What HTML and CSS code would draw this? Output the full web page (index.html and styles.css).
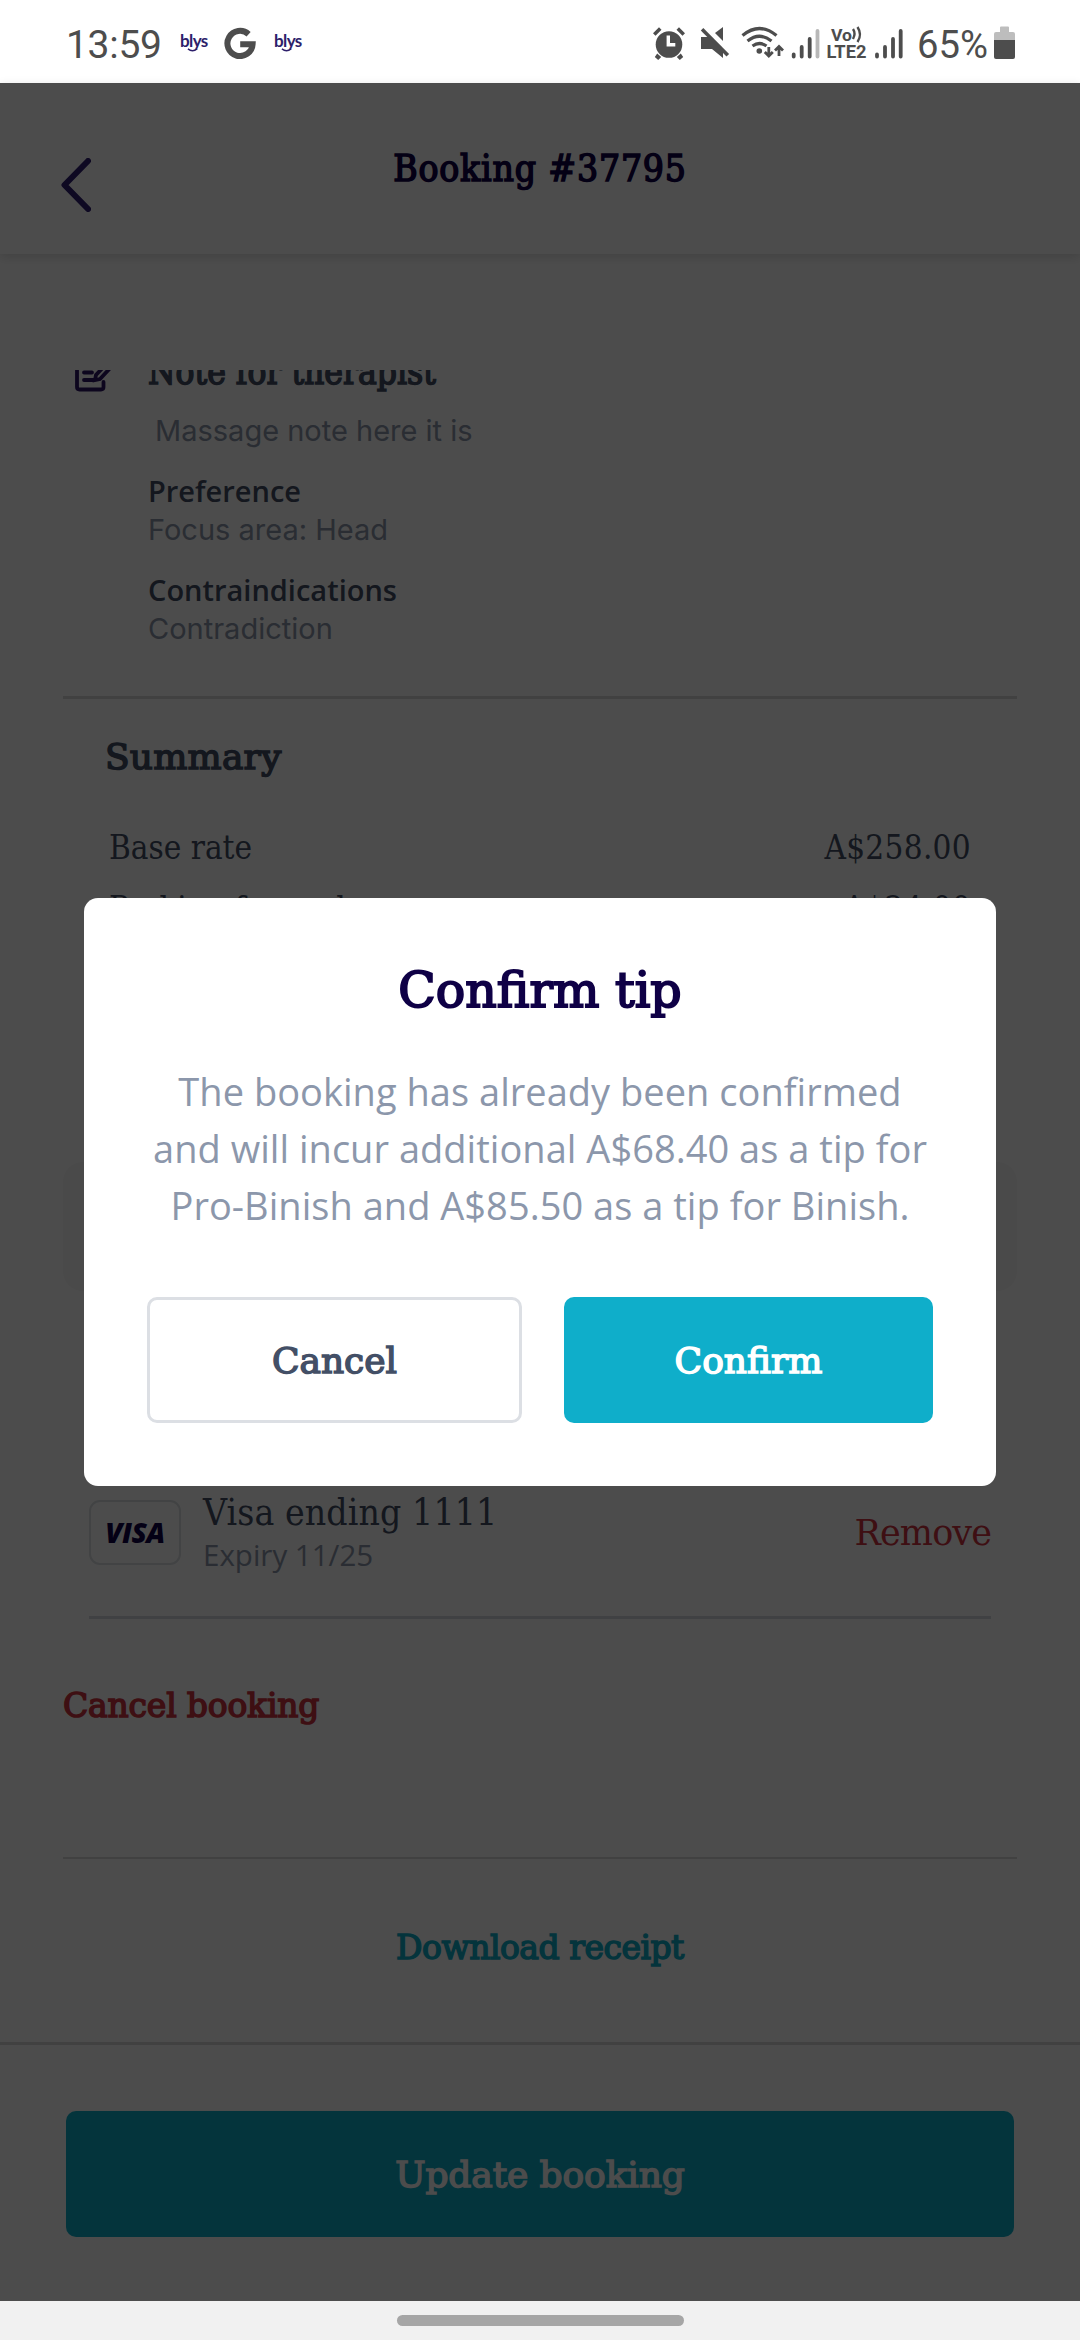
FILE: index.html
```
<!DOCTYPE html>
<html lang="en">
<head>
    <meta charset="UTF-8">
    <meta name="viewport" content="width=device-width, initial-scale=1.0">
    <title>Booking #37795</title>
    <link rel="stylesheet" href="styles.css">
</head>
<body>

<div class="status-bar">
    <div class="status-left">
        <span class="clock">13:59</span>
        <span class="blys">blys<svg class="smile" viewBox="0 0 12 4"><path d="M1 0.8Q6 4.6 11 0.8"/></svg></span>
        <svg class="google" viewBox="0 0 32 32"><path d="M24.6 7.2A12.6 12.6 0 1 0 28.6 17.2H16.2"/></svg>
        <span class="blys">blys<svg class="smile" viewBox="0 0 12 4"><path d="M1 0.8Q6 4.6 11 0.8"/></svg></span>
    </div>
    <!-- alarm, mute, wifi, signal bars, VoLTE, battery -->
    <svg class="status-icons" viewBox="0 0 380 50">
        <g fill="#4d4d4d">
            <circle cx="24" cy="24.5" r="13.3"/>
            <path d="M12.2 33.5l4 3.5-3 3-3.4-3zM35.8 33.5l-4 3.5 3 3 3.4-3z"/>
            <path d="M8 13.2l6-6 2.5 2.6-6 6zM40 13.2l-6-6-2.5 2.6 6 6z"/>
        </g>
        <path d="M23.3 15.5v9.3h7" stroke="#fff" stroke-width="3.4" fill="none"/>
        <g fill="#4d4d4d">
            <path d="M56 17h8l14 14v7L67 29H56z"/>
            <path d="M78 7v14l-8-8z"/>
            <path d="M58.3 8l25.8 26-2.6 2.6L55.8 10.5z"/>
            <circle cx="114.3" cy="31" r="2.8"/>
        </g>
        <g stroke="#4d4d4d" stroke-width="3.2" fill="none">
            <path d="M97.5 15.5q17-14 34 0M102.5 21q12-9.500 24 0M107.500 26q7-5 14 0"/>
            <path d="M123.8 27v8.500M119.800 32l4 4 4-4M134 36v-9M130 30.500l4-4 4 4" stroke-width="2.8"/>
        </g>
        <g stroke="#4d4d4d" stroke-width="3.8" stroke-linecap="round">
            <path d="M148.700 34.500v2M156.700 27v9.500M164.700 19v17.500"/>
            <path d="M172.500 11v25.500" stroke="#b8b8b8"/>
            <path d="M232 34.500v2M240 27v9.500M248 19v17.500M255.700 11v25.500"/>
        </g>
        <text class="volte" x="186" y="21.300" font-size="17" textLength="21" lengthAdjust="spacingAndGlyphs">Vo</text>
        <path d="M208 9q3 4.500 0 10M212.500 7q5 7.500 0 15" stroke="#4d4d4d" stroke-width="2.400" fill="none"/>
        <text class="volte" x="181.500" y="38" font-size="18.500" textLength="40" lengthAdjust="spacingAndGlyphs">LTE2</text>
        <text class="percent" x="272" y="38" textLength="71" lengthAdjust="spacingAndGlyphs">65%</text>
        <path d="M355 7.500q0-1 1-1h7q1 0 1 1V12h4q2 0 2 2v7h-21v-7q0-2 2-2h4z" fill="#bdbdbd"/>
        <path d="M349 20h21v17q0 2-2 2h-17q-2 0-2-2z" fill="#4d4d4d"/>
    </svg>
</div>

<div class="app">
    <div class="header">
        <svg class="back" viewBox="0 0 30 54"><path d="M27 3L3.500 27L27 51"/></svg>
        <h1>Booking #37795</h1>
    </div>

    <div class="content">
        <div class="note">
            <svg class="note-icon" viewBox="0 0 38 38">
                <path d="M18 6H4.500Q2 6 2 8.500V33q0 2.500 2.500 2.500H26q2.500 0 2.500-2.500V28"/>
                <path d="M9 18.500h8M9 26h9M20 26l1-5L34 7l4 4-13 14z"/>
            </svg>
            <div class="note-body">
                <h2>Note for therapist</h2>
                <p class="message">Massage note here it is</p>
                <h3>Preference</h3>
                <p class="focus">Focus area: Head</p>
                <h3>Contraindications</h3>
                <p class="contra">Contradiction</p>
            </div>
        </div>

        <div class="divider"></div>

        <div class="summary">
            <h2>Summary</h2>
            <div class="row"><span class="label">Base rate</span><span class="amount">A$258.00</span></div>
            <div class="row"><span class="label">Parking fee and</span><span class="amount">A$24.00</span></div>
        </div>

        <div class="panel"></div>

        <div class="card-row">
            <div class="card-logo"><span>VISA</span></div>
            <div class="card-info">
                <div class="card-name">Visa ending 1111</div>
                <div class="card-expiry">Expiry 11/25</div>
            </div>
            <a class="remove">Remove</a>
        </div>

        <a class="cancel-booking">Cancel booking</a>
        <div class="divider thin"></div>
        <a class="download">Download receipt</a>
    </div>

    <div class="footer">
        <button class="update">Update booking</button>
    </div>

    <div class="overlay">
        <div class="modal">
            <h2>Confirm tip</h2>
            <p>The booking has already been confirmed<br>and will incur additional A$68.40 as a tip for<br>Pro-Binish and A$85.50 as a tip for Binish.</p>
            <div class="actions">
                <button class="cancel">Cancel</button>
                <button class="confirm">Confirm</button>
            </div>
        </div>
    </div>
</div>

<div class="nav-bar"><div class="pill"></div></div>

</body>
</html>
```
FILE: styles.css
```
* {
    box-sizing: border-box;
}
body {
    margin: 0;
    width: 1080px;
    height: 2340px;
    display: flex;
    flex-direction: column;
    overflow: hidden;
    background-color: #fff;
    font-family: "DejaVu Serif Condensed", "DejaVu Serif", serif;
    color: #434f66;
    white-space: nowrap;
}
h1, h2, h3, p {
    margin: 0;
    font-weight: normal;
}
/* even slab weight for headings and buttons */
h1, h2, button, .cancel-booking, .download {
    font-family: "DejaVu Serif", serif;
    font-weight: normal;
    -webkit-text-stroke: 1.5px currentColor;
}
h1, .note h2 {
    font-family: "DejaVu Serif Condensed", "DejaVu Serif", serif;
}
button {
    border: none;
    padding: 0;
    white-space: nowrap;
}

/* status bar */
.status-bar {
    height: 83px;
    display: flex;
    justify-content: space-between;
    padding: 20px 55px 0 66px;
}
.status-left {
    display: flex;
    align-items: center;
    height: 45px;
}
.clock {
    padding-top: 4px;
    font-family: Roboto, sans-serif;
    font-size: 39px;
    letter-spacing: -0.3px;
    color: #4d4d4d;
    width: 114px;
}
.blys {
    display: flex;
    flex-direction: column;
    width: 28px;
    height: 18px;
    font-family: Lato, sans-serif;
    font-size: 17px;
    font-weight: bold;
    line-height: 13px;
    letter-spacing: -0.6px;
    color: #2d1f6b;
}
.smile {
    width: 11px;
    height: 4px;
    margin: 1px 0 0 7px;
    fill: none;
    stroke: #2d1f6b;
    stroke-width: 1.6;
    flex-shrink: 0;
}
.google {
    width: 32px;
    height: 32px;
    margin: 0 18px 0 16px;
    fill: none;
    stroke: #4d4d4d;
    stroke-width: 6;
}
.status-icons {
    width: 380px;
    height: 50px;
}
.volte {
    font-family: Roboto, sans-serif;
    font-weight: bold;
    fill: #4d4d4d;
}
.percent {
    font-family: Roboto, sans-serif;
    font-size: 39px;
    fill: #4d4d4d;
}

/* booking page */
.app {
    position: relative;
    height: 2218px;
    display: flex;
    flex-direction: column;
}
.header {
    height: 171px;
    flex-shrink: 0;
    display: grid;
    grid-template-columns: 91px 1fr 91px;
    box-shadow: 0 3px 10px rgba(0, 0, 0, 0.14);
}
.back {
    width: 30px;
    height: 54px;
    margin: 75px 0 0 61px;
    fill: none;
    stroke: #2f1f73;
    stroke-width: 6;
    stroke-linecap: round;
    stroke-linejoin: round;
}
.header h1 {
    margin-top: 62px;
    font-size: 37px;
    line-height: 48px;
    letter-spacing: 0.8px;
    text-align: center;
    color: #0f0046;
}
.content {
    height: 1672px;
    margin-top: 116px;
    padding: 0 63px;
    overflow: hidden;
    display: flex;
    flex-direction: column;
    flex-shrink: 0;
}
.note {
    display: flex;
    margin-top: -22px;
}
.note-icon {
    width: 38px;
    height: 38px;
    margin: 6px 35px 0 12px;
    fill: none;
    stroke: #2d1566;
    stroke-width: 3.8;
    stroke-linecap: round;
    overflow: visible;
}
.note h2 {
    font-size: 35px;
    line-height: 48px;
}
.note h3 {
    margin-top: 21px;
    font-family: "Open Sans", sans-serif;
    font-size: 29px;
    font-weight: 600;
    line-height: 37px;
}
.note p {
    margin-top: 3px;
    font-family: Inter, sans-serif;
    font-size: 29px;
    line-height: 36px;
    color: #8c97ab;
}
.note p + h3 + p + h3 {
    margin-top: 23px;
}
.note .message {
    margin: 15px 0 0 7px;
    line-height: 40px;
}
.divider {
    height: 3px;
    margin-top: 49px;
    background-color: #dadada;
    flex-shrink: 0;
}
.summary {
    padding: 34px 46px 0;
}
.summary h2 {
    margin: 0 0 36px -4px;
    font-size: 36px;
    line-height: 48px;
    letter-spacing: 0.2px;
}
.row {
    display: flex;
    justify-content: space-between;
    font-size: 33px;
    line-height: 61px;
}
.amount {
    letter-spacing: 0.3px;
}
.panel {
    height: 129px;
    margin-top: 223px;
    border-radius: 20px;
    background-color: #f7f7f7;
    flex-shrink: 0;
}
.card-row {
    display: flex;
    align-items: center;
    margin: 200px 26px 0;
    padding-bottom: 43px;
    border-bottom: 3px solid #d7dbe0;
}
.card-logo {
    width: 92px;
    height: 65px;
    margin-right: 22px;
    border: 2px solid #dce1e4;
    border-radius: 11px;
    display: flex;
    align-items: center;
    justify-content: center;
    font-family: "Open Sans", sans-serif;
    font-size: 28px;
    font-weight: 800;
    font-style: italic;
    letter-spacing: -0.5px;
    color: #0f0046;
}
.card-name {
    font-size: 37px;
    line-height: 44px;
    letter-spacing: 0.1px;
}
.card-expiry {
    margin-top: 2px;
    font-family: "Open Sans", sans-serif;
    font-size: 29.5px;
    line-height: 36px;
    color: #8c97ab;
}
.remove {
    margin-left: auto;
    padding-top: 2px;
    font-family: "DejaVu Serif", serif;
    font-size: 35px;
    letter-spacing: -0.9px;
    color: #cf3340;
}
.cancel-booking {
    margin-top: 65px;
    font-size: 33px;
    line-height: 44px;
    letter-spacing: -0.2px;
    color: #cf3340;
}
.divider.thin {
    height: 2px;
    margin-top: 129px;
}
.download {
    margin-top: 67px;
    font-size: 33px;
    line-height: 44px;
    letter-spacing: -0.5px;
    text-align: center;
    color: #0faeca;
}
.footer {
    flex: 1;
    padding: 66px;
    border-top: 3px solid #dadada;
}
.update {
    width: 948px;
    height: 126px;
    border-radius: 10px;
    background-color: #0faeca;
    color: #fff;
    font-size: 36px;
    letter-spacing: -0.1px;
}

/* confirm dialog */
.overlay {
    position: absolute;
    inset: 0;
    padding: 815px 84px 0;
    background-color: rgba(0, 0, 0, 0.7);
}
.modal {
    height: 588px;
    padding: 65px 63px 0;
    border-radius: 14px;
    background-color: #fff;
    text-align: center;
}
.modal h2 {
    font-size: 49px;
    line-height: 56px;
    color: #0f0046;
    -webkit-text-stroke-width: 2px;
}
.modal p {
    margin-top: 44px;
    font-family: "Open Sans", sans-serif;
    font-size: 38px;
    line-height: 57px;
    letter-spacing: 0.03px;
    color: #8c97ab;
}
.actions {
    display: grid;
    grid-template-columns: 375px 369px;
    justify-content: space-between;
    margin-top: 63px;
}
.actions button {
    height: 126px;
    border-radius: 10px;
    font-size: 36px;
}
.cancel {
    border: 3px solid #dcdfe4;
    background-color: #fff;
    color: #434f66;
}
.confirm {
    background-color: #0faeca;
    color: #fff;
}

/* gesture bar */
.nav-bar {
    height: 39px;
    display: flex;
    justify-content: center;
    padding-top: 14px;
    background-color: #f1f1f1;
}
.pill {
    width: 287px;
    height: 11px;
    border-radius: 6px;
    background-color: #a6a6a6;
}
```
